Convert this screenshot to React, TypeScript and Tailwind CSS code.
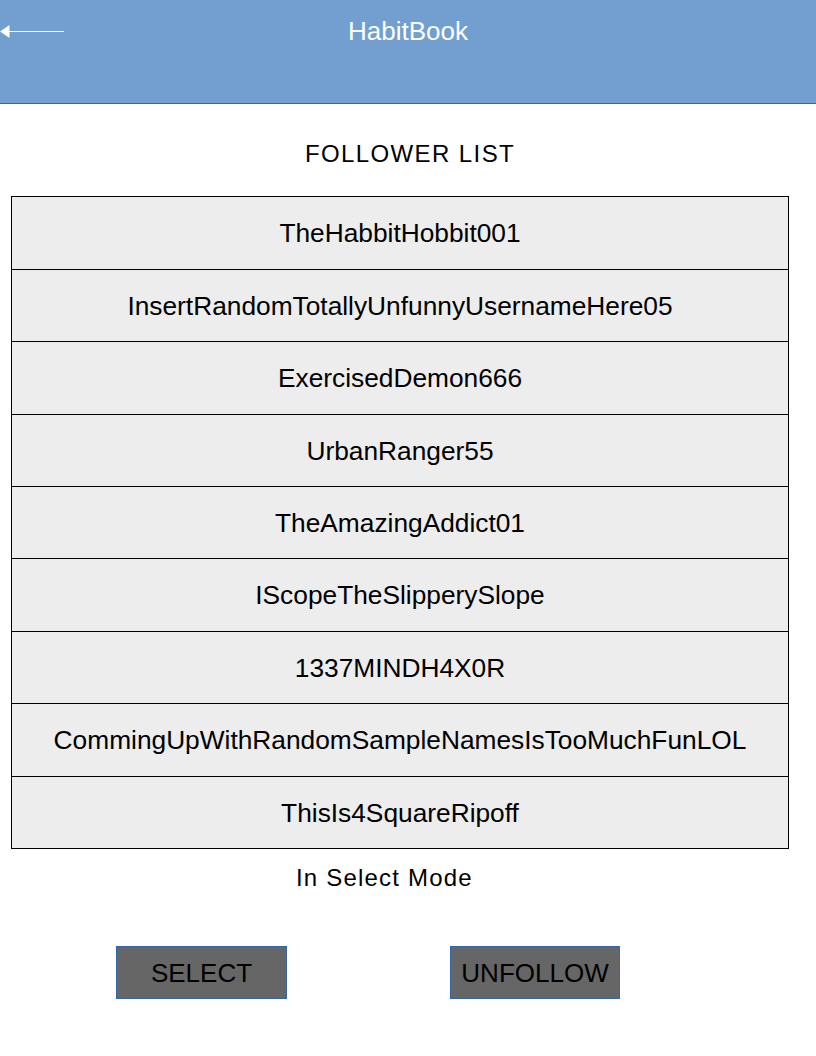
import React from "react";

const names = [
  "TheHabbitHobbit001",
  "InsertRandomTotallyUnfunnyUsernameHere05",
  "ExercisedDemon666",
  "UrbanRanger55",
  "TheAmazingAddict01",
  "IScopeTheSlipperySlope",
  "1337MINDH4X0R",
  "CommingUpWithRandomSampleNamesIsTooMuchFunLOL",
  "ThisIs4SquareRipoff",
];

const heights = ["h-[73px]", "h-[72px]", "h-[73px]", "h-[72px]", "h-[72px]", "h-[73px]", "h-[72px]", "h-[73px]", "h-[73px]"];

export default function App() {
  return (
    <div className="w-[816px] h-[1056px] bg-white font-['Liberation_Sans',Arial,sans-serif] text-black">
      <header className="relative h-[104px] bg-[#729fcf] border-b border-[#3465a4]">
        <svg className="absolute left-0 top-[24px]" width="66" height="16" viewBox="0 0 66 16">
          <line x1="8" y1="7.5" x2="64" y2="7.5" stroke="white" strokeWidth="1" />
          <polygon points="0,7.5 9.5,1 9.5,14" fill="white" />
        </svg>
        <div className="pt-[16px] text-center text-[26px] leading-[30px] text-white">HabitBook</div>
      </header>
      <div className="mt-[36px] text-center text-[24px] leading-[28px] tracking-[1.4px] pl-[4px]">FOLLOWER LIST</div>
      <div className="mt-[28px] ml-[11px] w-[778px] border-x border-black">
        {names.map((n, i) => (
          <div
            key={n}
            className={`${heights[i]} border-t border-black bg-[#ededed] flex items-center justify-center text-[26.3px] leading-[30px] ${i === names.length - 1 ? "border-b" : ""}`}
          >
            {n}
          </div>
        ))}
      </div>
      <div className="mt-[15px] ml-[296px] text-[24px] leading-[28px] tracking-[1.2px]">In Select Mode</div>
      <div className="mt-[54px] flex">
        <button className="ml-[116px] w-[171px] h-[53px] bg-[#666666] border border-[#3465a4] text-[26px] leading-[30px] text-black">SELECT</button>
        <button className="ml-[163px] w-[170px] h-[53px] bg-[#666666] border border-[#3465a4] text-[26px] leading-[30px] text-black">UNFOLLOW</button>
      </div>
    </div>
  );
}
